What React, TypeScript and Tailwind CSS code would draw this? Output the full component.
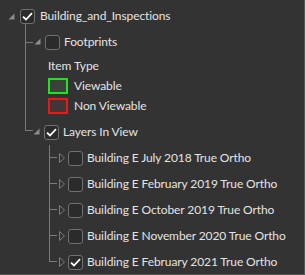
import React from 'react';

const LINE = 'border-[#7a7a7a]';

const Expanded = () => (
  <svg width="7" height="7" viewBox="0 0 7 7" className="shrink-0">
    <polygon points="6.5,0.5 6.5,6.5 0.5,6.5" fill="#8c8c8c" />
  </svg>
);

const Collapsed = () => (
  <svg width="6" height="10" viewBox="0 0 6 10" className="shrink-0">
    <polygon points="0.5,0.5 5.5,5 0.5,9.5" fill="none" stroke="#7c7c7c" strokeWidth="1" />
  </svg>
);

const Checkbox = ({ checked }: { checked?: boolean }) => (
  <div className="w-[15px] h-[15px] shrink-0 rounded-[3px] border border-[#707070] bg-[#2b2b2b] flex items-center justify-center">
    {checked && (
      <svg width="11" height="9" viewBox="0 0 11 9">
        <path d="M1 4.6 L4 7.5 L10 1.2" fill="none" stroke="#ffffff" strokeWidth="1.8" />
      </svg>
    )}
  </div>
);

const layers = [
  { name: 'Building E July 2018 True Ortho', checked: false },
  { name: 'Building E February 2019 True Ortho', checked: false },
  { name: 'Building E October 2019 True Ortho', checked: false },
  { name: 'Building E November 2020 True Ortho', checked: false },
  { name: 'Building E February 2021 True Ortho', checked: true },
];

export default function App() {
  return (
    <div
      className="w-[305px] h-[275px] bg-[#333333] text-[#e3e3e3] text-[12px] tracking-[-0.1px] whitespace-nowrap overflow-hidden border-r border-b border-[#565656] pt-[3px]"
      style={{ fontFamily: 'Lato, "Noto Sans", sans-serif' }}
    >
      {/* root */}
      <div className="h-[26px] flex items-center pl-[8px]">
        <Expanded />
        <div className="ml-[5px]"><Checkbox checked /></div>
        <span className="ml-[5px]">Building_and_Inspections</span>
      </div>

      <div className="ml-[25px] -mt-[5px]">
        {/* Footprints */}
        <div className={`border-l ${LINE} pt-[5px]`}>
          <div className="h-[26px] flex items-center">
            <div className={`w-[7px] border-t ${LINE}`} />
            <div className="ml-[1px] -mt-[2px]"><Expanded /></div>
            <div className="ml-[4px]"><Checkbox /></div>
            <span className="ml-[4px]">Footprints</span>
          </div>

          {/* legend */}
          <div className="pl-[22px] pb-[5px]">
            <div className="h-[22px] flex items-center">Item Type</div>
            <div className="mt-[1px] flex flex-col gap-[4px]">
              <div className="h-[16px] flex items-center">
                <div className="w-[20px] h-[16px] border-2 border-[#1ae61a] bg-[#3a423a]" />
                <span className="ml-[6px]">Viewable</span>
              </div>
              <div className="h-[16px] flex items-center">
                <div className="w-[20px] h-[16px] border-2 border-[#ee1616] bg-[#423535]" />
                <span className="ml-[6px]">Non Viewable</span>
              </div>
            </div>
          </div>
        </div>

        {/* Layers In View */}
        <div className="h-[26px] flex items-start">
          <div className={`w-[8px] h-[12px] border-l border-b ${LINE}`} />
          <div className="h-[26px] flex items-center">
            <div className="-mt-[2px]"><Expanded /></div>
            <div className="ml-[4px]"><Checkbox checked /></div>
            <span className="ml-[4px]">Layers In View</span>
          </div>
        </div>

        <div className="ml-[24px]">
          {layers.map((l, i) => {
            const last = i === layers.length - 1;
            return (
              <div key={l.name} className="h-[26px] flex items-start">
                <div className={`w-[8px] shrink-0 border-l ${LINE} ${last ? 'h-[13px] border-b' : 'h-[26px] flex flex-col'}`}>
                  {!last && <div className={`h-[13px] border-b ${LINE}`} />}
                </div>
                <div className="h-[26px] flex items-center shrink-0">
                  <div className="ml-[2px]"><Collapsed /></div>
                  <div className="ml-[3px]"><Checkbox checked={l.checked} /></div>
                  <span className="ml-[4px]">{l.name}</span>
                </div>
              </div>
            );
          })}
        </div>
      </div>
    </div>
  );
}
